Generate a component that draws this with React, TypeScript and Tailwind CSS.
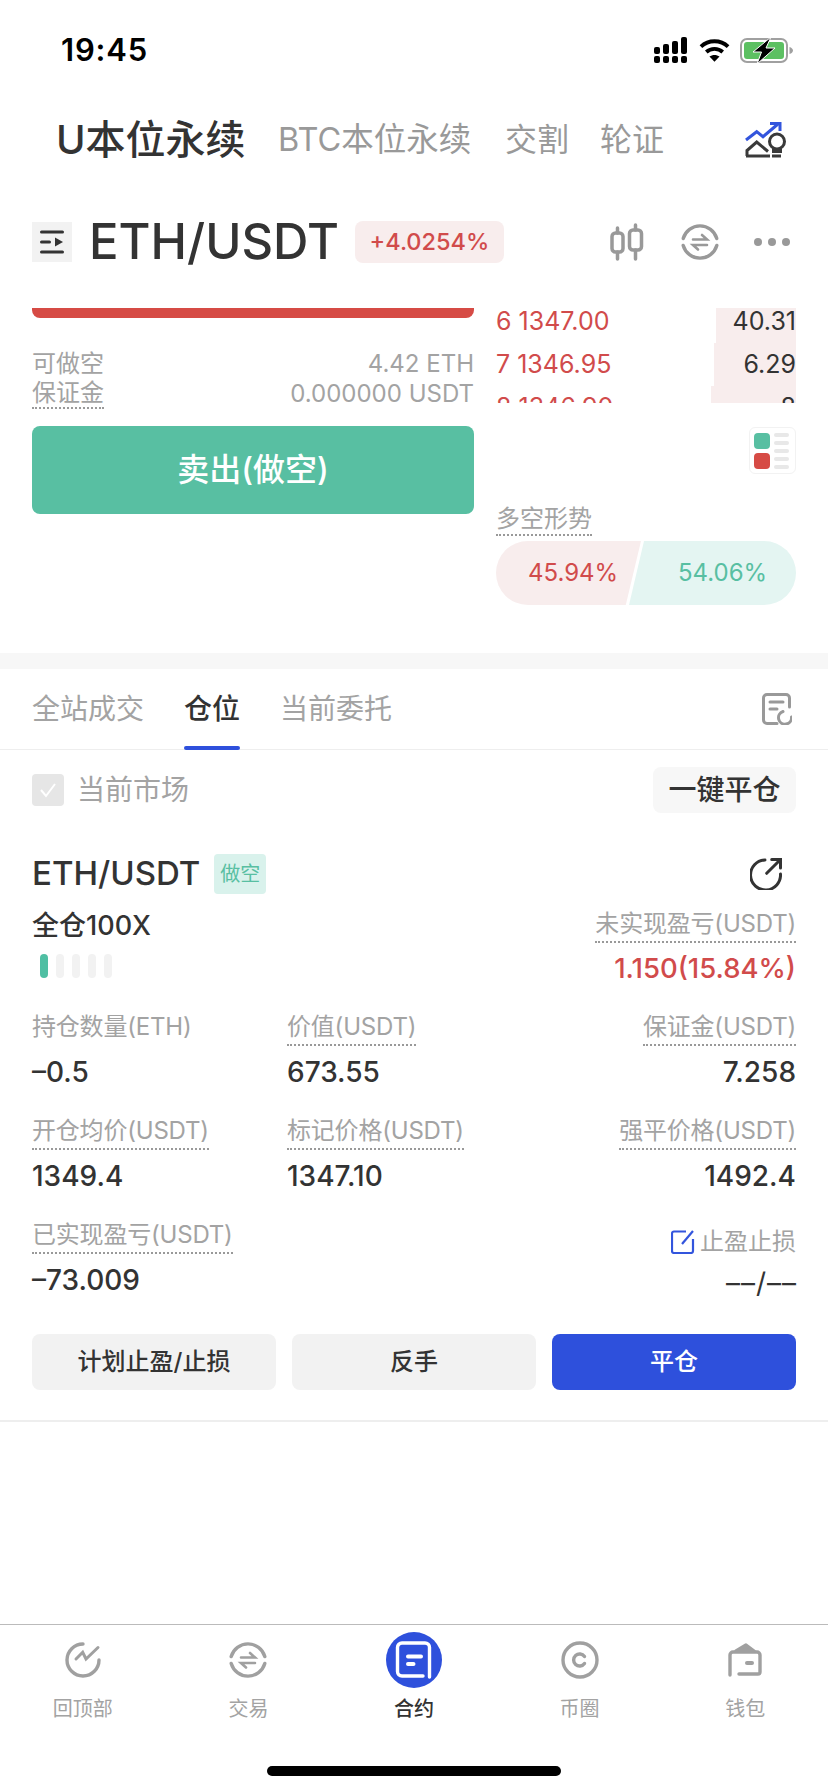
const font = "font-['Inter','Noto_Sans_CJK_SC',sans-serif]";

function Dotted({ children, className = "" }: { children: React.ReactNode; className?: string }) {
  return (
    <span className={"w-fit h-[34px] leading-[30px] text-[24px] tracking-[-0.2px] text-[#a3a3a3] border-b-2 border-dotted border-[#999] " + className}>
      {children}
    </span>
  );
}

function Cell({ label, value, right, plain }: { label: string; value: string; right?: boolean; plain?: boolean }) {
  return (
    <div className={"flex flex-col " + (right ? "items-end" : "items-start")}>
      <Dotted className={plain ? "border-transparent" : ""}>{label}</Dotted>
      <span className="mt-2 h-9 leading-9 text-[28px] font-medium text-[#333]">{value}</span>
    </div>
  );
}

function Signal() {
  return (
    <svg width="33" height="26" viewBox="0 0 33 26" fill="#000">
      <rect x="0" y="10" width="6" height="7" rx="2" />
      <rect x="9" y="7" width="6" height="10" rx="2" />
      <rect x="18" y="4" width="6" height="13" rx="2" />
      <rect x="27" y="0" width="6" height="17" rx="2" />
      <rect x="0" y="19" width="6" height="7" rx="2" />
      <rect x="9" y="19" width="6" height="7" rx="2" />
      <rect x="18" y="19" width="6" height="7" rx="2" />
      <rect x="27" y="19" width="6" height="7" rx="2" />
    </svg>
  );
}

function Wifi() {
  return (
    <svg width="31" height="24" viewBox="0 0 32 24" fill="none" stroke="#000" strokeWidth="4">
      <path d="M2 8.500C9.800 1.200 22.200 1.200 30 8.500" />
      <path d="M7.500 14C12.300 9.800 19.700 9.800 24.500 14" />
      <path d="M16 24l-5.200-5.200c3-2.300 7.400-2.300 10.400 0z" fill="#000" stroke="none" />
    </svg>
  );
}

function Battery() {
  return (
    <svg width="54" height="27" viewBox="0 0 54 27">
      <rect x="1" y="2" width="46" height="23" rx="6" fill="none" stroke="#a0a0a0" strokeWidth="2" />
      <rect x="4" y="5" width="40" height="17" rx="3" fill="#5cc062" />
      <path d="M49.500 10c2 .5 3.500 2 3.500 3.500s-1.500 3-3.500 3.500z" fill="#a0a0a0" />
      <path d="M31 0L13 15h8.500L17 27 35 11h-9z" fill="#000" stroke="#fff" strokeWidth="1" />
    </svg>
  );
}

function InsightIcon() {
  return (
    <svg width="42" height="36" viewBox="0 0 42 36" fill="none" strokeWidth="3">
      <path d="M1 18L11.700 9.700 18 14.700 33 2" stroke="#3355dd" />
      <path d="M25 1.500h10V9" stroke="#3355dd" />
      <path d="M2 34v-5.500L11.700 20 23 29.500" stroke="#3a3a3a" />
      <path d="M1 34h24" stroke="#3a3a3a" />
      <circle cx="32" cy="19.500" r="7.500" stroke="#3a3a3a" />
      <path d="M28.500 26v3.500h7V26M27 34h9" stroke="#3a3a3a" />
    </svg>
  );
}

function CandleIcon() {
  return (
    <svg width="34" height="38" viewBox="0 0 34 38" fill="none" stroke="#999" strokeWidth="3.500" strokeLinecap="round">
      <rect x="2" y="10" width="11" height="19" rx="3.500" />
      <rect x="19.500" y="7" width="12" height="20" rx="3.500" />
      <path d="M7.500 5v5M7.500 29v7M25.500 2v5M25.500 27v9" />
    </svg>
  );
}

function SwapIcon({ size = 38, color = "#999" }: { size?: number; color?: string }) {
  return (
    <svg width={size} height={size} viewBox="0 0 38 38" fill="none" stroke={color} strokeWidth="3.400" strokeLinecap="round">
      <path d="M2.200 15.500A17.500 17.500 0 0 1 35.800 15.500" />
      <path d="M2.200 22.500A17.500 17.500 0 0 0 35.800 22.500" />
      <path d="M12 16.500h14l-5-4.500" strokeWidth="2.600" />
      <path d="M26 22H12l5 4.500" strokeWidth="2.600" />
    </svg>
  );
}

function RecordIcon() {
  return (
    <svg width="30" height="32" viewBox="0 0 30 32" fill="none" stroke="#999" strokeWidth="3" strokeLinecap="round">
      <path d="M15 30.500H5a3.500 3.500 0 0 1-3.500-3.500V5A3.500 3.500 0 0 1 5 1.500h19A3.500 3.500 0 0 1 27.500 5v9" />
      <path d="M8 9h13M8 16h7" />
      <path d="M21 18.500A6.500 6.500 0 1 0 29.500 24" />
    </svg>
  );
}

function ShareIcon() {
  return (
    <svg width="32" height="32" viewBox="0 0 32 32" fill="none" stroke="#333" strokeWidth="3" strokeLinecap="round">
      <path d="M15 2A15 15 0 1 0 30.500 16" />
      <path d="M16.700 15.300L30 2M21.700 1.500H30.500V10" />
    </svg>
  );
}

function EditIcon() {
  return (
    <svg width="24" height="24" viewBox="0 0 24 24" fill="none" stroke="#3355dd" strokeWidth="2.200">
      <path d="M15 1.500H3a2 2 0 0 0-2 2V21a2 2 0 0 0 2 2h17a2 2 0 0 0 2-2V9" />
      <path d="M11 14L22 1" />
    </svg>
  );
}

function NavIcon({ kind }: { kind: string }) {
  if (kind === "top")
    return (
      <svg width="36" height="36" viewBox="0 0 36 36" fill="none" stroke="#a0a0a0" strokeWidth="3.400" strokeLinecap="round">
        <path d="M34 18A16 16 0 1 1 18 2" />
        <path d="M11 17l6.700-6.700L21 17 33 5.500" strokeWidth="3" />
      </svg>
    );
  if (kind === "swap") return <SwapIcon size={38} color="#a0a0a0" />;
  if (kind === "circle")
    return (
      <svg width="38" height="38" viewBox="0 0 38 38" fill="none" stroke="#a0a0a0" strokeWidth="3.400" strokeLinecap="round">
        <circle cx="19" cy="19" r="17" />
        <path d="M23.500 15.500a6 6 0 1 0 0 7" strokeWidth="3.400" />
      </svg>
    );
  if (kind === "wallet")
    return (
      <svg width="34" height="34" viewBox="0 0 34 34" fill="none" stroke="#a0a0a0" strokeWidth="3.400" strokeLinecap="round" strokeLinejoin="round">
        <path d="M2 32V12a3 3 0 0 1 3-3h24a3 3 0 0 1 3 3v17a2 2 0 0 1-2 2H11" />
        <path d="M8 8l10-6 8 6z" fill="#a0a0a0" />
        <path d="M19 20h5" strokeWidth="4" />
      </svg>
    );
  return (
    <div className="w-14 h-14 rounded-full bg-[#2e50dc]">
      <svg width="56" height="56" viewBox="0 0 56 56" fill="none" stroke="#fff" strokeWidth="3.400" strokeLinecap="round">
        <path d="M37 44H16a4.500 4.500 0 0 1-4.500-4.500V15.500A4.500 4.500 0 0 1 16 11h23a4.500 4.500 0 0 1 4.500 4.500V45" />
        <path d="M22 24.500h13M22 32h5.500" strokeWidth="4" />
      </svg>
    </div>
  );
}

const nav = [
  ["top", "回顶部"],
  ["swap", "交易"],
  ["book", "合约"],
  ["circle", "币圈"],
  ["wallet", "钱包"],
];

const book = [
  ["6 1347.00", "40.31", "w-[80px]"],
  ["7 1346.95", "6.29", "w-[82px]"],
  ["8 1346.90", "8", "w-[85px]"],
];

export default function App() {
  return (
    <div className={"w-[828px] h-[1792px] bg-white flex flex-col overflow-hidden " + font}>
      {/* status bar */}
      <div className="h-[100px] flex items-center justify-between pl-[61px] pr-[34px] shrink-0">
        <span className="text-[31px] font-semibold text-black tracking-[0.8px]">19:45</span>
        <div className="flex items-center">
          <Signal />
          <div className="ml-3"><Wifi /></div>
          <div className="ml-[10px]"><Battery /></div>
        </div>
      </div>

      {/* market tabs */}
      <div className="h-[80px] flex items-center pl-[56px] pr-[41px] shrink-0">
        <span className="text-[40px] font-medium text-[#333] w-[222px]">U本位永续</span>
        <span className="text-[32.5px] text-[#999] w-[227px]">BTC本位永续</span>
        <span className="text-[32px] text-[#999] w-[95px]">交割</span>
        <span className="text-[32px] text-[#999]">轮证</span>
        <div className="ml-auto"><InsightIcon /></div>
      </div>

      {/* pair row */}
      <div className="h-[128px] pb-1 flex items-center pl-8 pr-[38px] shrink-0">
        <div className="w-10 h-10 bg-[#f2f2f2] flex items-center justify-center">
          <svg width="24" height="24" viewBox="0 0 24 24" fill="none" stroke="#333" strokeWidth="3" strokeLinecap="round">
            <path d="M1.500 2h21M1.500 12h8M1.500 22h21" />
            <path d="M15 7.500l8 4.500-8 4.500z" fill="#333" stroke="none" />
          </svg>
        </div>
        <span className="ml-[17px] text-[49px] font-medium text-[#333]">ETH/USDT</span>
        <span className="ml-[16px] w-[149px] h-[42px] rounded-lg bg-[#f8eded] text-[#d14b4b] text-[23.5px] font-medium flex items-center justify-center">+4.0254%</span>
        <div className="ml-auto flex items-center">
          <CandleIcon />
          <div className="ml-[37px]"><SwapIcon /></div>
          <div className="ml-[35px] flex gap-[6px]">
            <i className="w-2 h-2 rounded-full bg-[#999]" />
            <i className="w-2 h-2 rounded-full bg-[#999]" />
            <i className="w-2 h-2 rounded-full bg-[#999]" />
          </div>
        </div>
      </div>

      {/* trade */}
      <div className="h-[345px] shrink-0 flex pl-8 pr-8">
        <div className="w-[442px] flex flex-col">
          <div className="h-[10px] bg-[#d64b45] rounded-b-lg" />
          <div className="mt-[31px] h-[30px] flex justify-between items-center text-[24px] text-[#a3a3a3]">
            <span>可做空</span>
            <span>4.42 ETH</span>
          </div>
          <div className="h-[30px] flex justify-between items-center text-[24px] text-[#a3a3a3]">
            <span className="border-b-2 border-dotted border-[#999] leading-[28px]">保证金</span>
            <span>0.000000 USDT</span>
          </div>
          <button className="mt-[17px] h-[88px] rounded-lg bg-[#58bfa2] text-white text-[32px] font-medium">卖出(做空)</button>
        </div>
        <div className="ml-[22px] flex-1 flex flex-col">
          <div className="h-[95px] overflow-hidden">
            <div className="-mt-2">
              {book.map(([price, qty, w]) => (
                <div key={price} className="relative h-[43px] flex items-center justify-between text-[25px]">
                  <span className="text-[#d14b4b] relative">{price}</span>
                  <span className="text-[#333] relative z-10">{qty}</span>
                  <div className={"absolute right-0 top-0 bottom-0 bg-[#f8eded] " + w} />
                </div>
              ))}
            </div>
          </div>
          <div className="mt-6 self-end w-[47px] h-[47px] rounded-md border border-[#f2f2f2] flex items-center pl-[4px] gap-[4px]">
            <div className="flex flex-col gap-1">
              <i className="w-4 h-4 rounded-[4px] bg-[#58bfa2]" />
              <i className="w-4 h-4 rounded-[4px] bg-[#d64b45]" />
            </div>
            <div className="flex flex-col gap-1">
              <i className="w-[15px] h-1 rounded-full bg-[#e8e8e8]" />
              <i className="w-[15px] h-1 rounded-full bg-[#e8e8e8]" />
              <i className="w-[15px] h-1 rounded-full bg-[#e8e8e8]" />
              <i className="w-[15px] h-1 rounded-full bg-[#e8e8e8]" />
              <i className="w-[15px] h-1 rounded-full bg-[#e8e8e8]" />
            </div>
          </div>
          <span className="mt-[30px] w-fit h-[32px] leading-[30px] text-[24px] text-[#a3a3a3] border-b-2 border-dotted border-[#999]">多空形势</span>
          <div className="mt-[5px] h-[64px] flex rounded-full overflow-hidden">
            <div className="w-[145px] bg-[#f8eded] text-[#d14b4b] text-[24px] flex items-center pl-[32px] [clip-path:polygon(0_0,100%_0,89.5%_100%,0_100%)]">45.94%</div>
            <div className="-ml-[12px] flex-1 bg-[#e4f5f2] text-[#58bfa2] text-[24px] flex items-center pl-[49px] [clip-path:polygon(15px_0,100%_0,100%_100%,0_100%)]">54.06%</div>
          </div>
        </div>
      </div>

      <div className="h-4 bg-[#f7f7f7] shrink-0" />

      {/* tabs */}
      <div className="h-[81px] shrink-0 border-b border-[#eee] flex items-center pl-8 pr-9 text-[28px] text-[#a3a3a3]">
        <span>全站成交</span>
        <span className="relative ml-10 h-full flex items-center text-[#333] font-medium">
          仓位
          <i className="absolute left-0 right-0 -bottom-px h-1 rounded-full bg-[#2e50dc]" />
        </span>
        <span className="ml-10">当前委托</span>
        <div className="ml-auto"><RecordIcon /></div>
      </div>

      {/* filter */}
      <div className="h-[80px] shrink-0 flex items-center justify-between px-8">
        <div className="flex items-center">
          <span className="w-8 h-8 rounded bg-[#e6e6e6] flex items-center justify-center">
            <svg width="20" height="20" viewBox="0 0 20 20" fill="none" stroke="#fff" strokeWidth="2"><path d="M3 10l5 6 9-12" /></svg>
          </span>
          <span className="ml-[13px] text-[28px] text-[#a3a3a3]">当前市场</span>
        </div>
        <span className="w-[143px] h-[46px] rounded-lg bg-[#f7f7f7] text-[28px] font-medium text-[#333] flex items-center justify-center">一键平仓</span>
      </div>

      {/* position */}
      <div className="flex-1 flex flex-col">
        <div className="mt-[24px] h-10 shrink-0 flex items-center px-8">
          <span className="text-[33px] font-medium text-[#333]">ETH/USDT</span>
          <span className="ml-[14px] w-[52px] h-10 rounded bg-[#d9f2ec] text-[#58bfa2] text-[20px] flex items-center justify-center">做空</span>
          <div className="ml-auto mr-[14px]"><ShareIcon /></div>
        </div>

        <div className="mt-[15px] h-[75px] shrink-0 flex justify-between px-8">
          <div className="flex flex-col">
            <span className="mt-[2px] h-[30px] leading-[30px] text-[27px] font-medium text-[#333]">全仓100X</span>
            <div className="mt-[13px] ml-2 flex gap-2">
              <i className="w-2 h-6 rounded-sm bg-[#4fbfa3]" />
              <i className="w-2 h-6 rounded-sm bg-[#f2f2f2]" />
              <i className="w-2 h-6 rounded-sm bg-[#f2f2f2]" />
              <i className="w-2 h-6 rounded-sm bg-[#f2f2f2]" />
              <i className="w-2 h-6 rounded-sm bg-[#f2f2f2]" />
            </div>
          </div>
          <div className="flex flex-col items-end">
            <Dotted>未实现盈亏(USDT)</Dotted>
            <span className="mt-[10px] h-[30px] leading-[30px] text-[27.5px] font-medium text-[#d14b4b]">1.150(15.84%)</span>
          </div>
        </div>

        <div className="mt-[28px] shrink-0 px-8 grid grid-cols-[255px_1fr_auto] gap-y-[26px]">
          <Cell label="持仓数量(ETH)" value="–0.5" plain />
          <Cell label="价值(USDT)" value="673.55" />
          <Cell label="保证金(USDT)" value="7.258" right />
          <Cell label="开仓均价(USDT)" value="1349.4" />
          <Cell label="标记价格(USDT)" value="1347.10" />
          <Cell label="强平价格(USDT)" value="1492.4" right />
          <Cell label="已实现盈亏(USDT)" value="–73.009" />
          <div />
          <div className="flex flex-col items-end">
            <div className="mt-[7px] flex items-center gap-[5px] h-[30px]">
              <EditIcon />
              <span className="text-[24px] text-[#a3a3a3]">止盈止损</span>
            </div>
            <span className="mt-[8px] h-9 leading-9 text-[28px] text-[#333] tracking-[1px] -mr-[1px]">––/––</span>
          </div>
        </div>

        <div className="mt-[33px] shrink-0 grid grid-cols-3 gap-4 px-8">
          <button className="h-14 rounded-lg bg-[#f2f2f2] text-[24px] font-medium text-[#333]">计划止盈/止损</button>
          <button className="h-14 rounded-lg bg-[#f2f2f2] text-[24px] font-medium text-[#333]">反手</button>
          <button className="h-14 rounded-lg bg-[#2e50dc] text-[24px] font-medium text-white">平仓</button>
        </div>

        <div className="mt-[30px] h-[2px] bg-[#eee] shrink-0" />
      </div>

      {/* nav */}
      <div className="h-[168px] shrink-0 border-t border-[#bbb] flex flex-col">
        <div className="mt-[7px] grid grid-cols-5">
          {nav.map(([kind, label]) => (
            <div key={kind} className="flex flex-col items-center">
              <div className="h-14 flex items-center justify-center"><NavIcon kind={kind} /></div>
              <span className={"mt-[7px] h-7 leading-7 text-[20px] " + (kind === "book" ? "text-[#333] font-medium" : "text-[#a3a3a3]")}>{label}</span>
            </div>
          ))}
        </div>
        <div className="mt-[43px] self-center w-[294px] h-[10px] rounded-full bg-black" />
      </div>
    </div>
  );
}
